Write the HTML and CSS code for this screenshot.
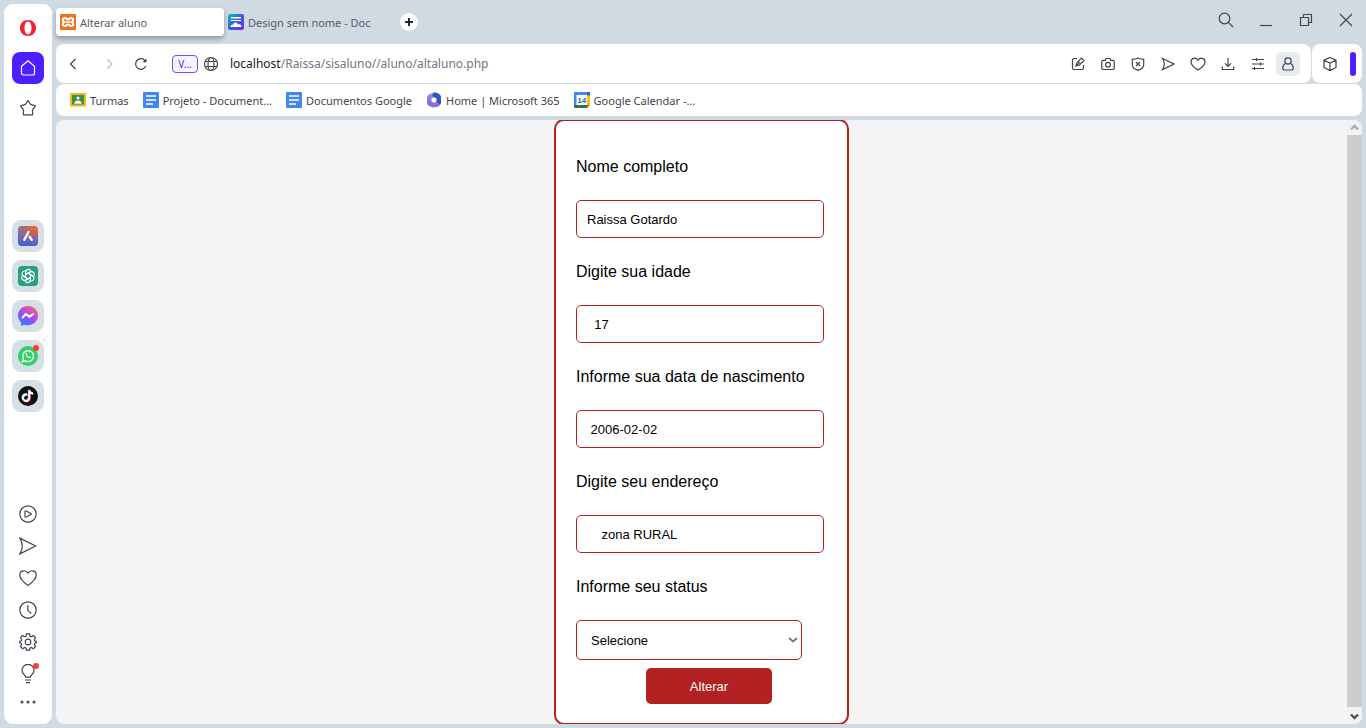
FILE: index.html
```html
<!DOCTYPE html>
<html lang="pt-BR">
<head>
<meta charset="utf-8">
<title>Alterar aluno</title>
<link rel="stylesheet" href="styles.css">
</head>
<body>
<aside class="sidebar">
  <div class="side-group">
    <button class="side-btn" aria-label="Menu"><svg width="18" height="18" viewBox="0 0 18 18"><path fill="#fa1e34" fill-rule="evenodd" d="M9 1C4.300 1 1 4.500 1 9s3.300 8 8 8 8-3.500 8-8-3.300-8-8-8zm0 1.600c2.100 0 3.500 2.800 3.500 6.400S11.100 15.400 9 15.400 5.500 12.600 5.500 9 6.900 2.600 9 2.600z"/></svg></button>
    <button class="side-btn home" aria-label="Início"><svg class="line" width="16" height="18" viewBox="0 0 16 18"><path d="M1.500 7.300 8 1.700l6.500 5.600v6.700a2 2 0 0 1-2 2h-9a2 2 0 0 1-2-2z"/></svg></button>
    <button class="side-btn" aria-label="Favoritos"><svg class="line" width="18" height="18" viewBox="0 0 18 18"><path stroke-linejoin="round" d="m9 1.500 2.600 3.900 4.800 1.400-2.900 4 .1 5H4.400l.1-5-2.900-4 4.800-1.400z"/></svg></button>
  </div>
  <div class="side-group apps">
    <button class="side-btn app" aria-label="Aria"><svg width="20" height="20" viewBox="0 0 20 20"><defs><linearGradient id="aria" x1="0" y1=".3" x2="1" y2=".2"><stop offset="0" stop-color="#8b6ea6"/><stop offset=".4" stop-color="#b5695f"/><stop offset="1" stop-color="#f0672c"/></linearGradient><linearGradient id="ariaBlue" x1="0" y1="0" x2="0" y2="1"><stop offset=".2" stop-color="#3f62dd" stop-opacity="0"/><stop offset="1" stop-color="#3f62dd"/></linearGradient></defs><rect width="20" height="20" rx="4" fill="url(#aria)"/><rect width="20" height="20" rx="4" fill="url(#ariaBlue)"/><path d="M6.300 13.800 10.500 6M11.700 10.800l2 3" fill="none" stroke="#fff" stroke-width="2.400" stroke-linecap="round"/></svg></button>
    <button class="side-btn app" aria-label="ChatGPT"><svg width="20" height="20" viewBox="0 0 20 20"><rect width="20" height="20" rx="4" fill="#26a17d"/><g fill="none" stroke="#fff" stroke-width="1.100"><path id="petal" d="M7.500 11.400V6.300a3 3 0 0 1 5.500-1.600M7.500 8.600l4.400-2.500a3 3 0 0 1 4.200 1.300"/><use href="#petal" transform="rotate(60 10 10)"/><use href="#petal" transform="rotate(120 10 10)"/><use href="#petal" transform="rotate(180 10 10)"/><use href="#petal" transform="rotate(240 10 10)"/><use href="#petal" transform="rotate(300 10 10)"/></g></svg></button>
    <button class="side-btn app" aria-label="Messenger"><svg width="20" height="20" viewBox="0 0 20 20"><defs><linearGradient id="msg" x1=".15" y1="1" x2=".8" y2="0"><stop offset="0" stop-color="#138fff"/><stop offset=".5" stop-color="#a445fb"/><stop offset="1" stop-color="#ff6870"/></linearGradient></defs><path d="M10 0C4.300 0 0 4.100 0 9.600c0 2.900 1.200 5.300 3.100 7V20l3.300-1.300c1.100.4 2.300.5 3.600.5 5.700 0 10-4.100 10-9.600S15.700 0 10 0z" fill="url(#msg)"/><path d="m4.200 12.200 3.500-4.400 3.600 3 4.500-3.300" fill="none" stroke="#fff" stroke-width="2.100" stroke-linejoin="round"/></svg></button>
    <button class="side-btn app" aria-label="WhatsApp"><svg width="20" height="20" viewBox="0 0 20 20"><circle cx="10" cy="10" r="10" fill="#2bd366"/><path d="m4.500 15.700.9-3.100a5.400 5.400 0 1 1 2.100 2.200z" fill="none" stroke="#fff" stroke-width="1.400"/><path d="M7.800 7.200c.5-.7 1-.4 1.300.6.200.6-.4.800-.4 1.100.5 1 1.300 1.700 2.300 2.100.4 0 .6-.8 1.100-.6 1.100.4 1.500.8.700 1.600-1.400 1.300-5.800-1.900-5-4.800z" fill="#fff"/></svg><span class="dot"></span></button>
    <button class="side-btn app" aria-label="TikTok"><svg width="20" height="20" viewBox="0 0 20 20"><circle cx="10" cy="10" r="10" fill="#111"/><g fill="none" stroke-width="1.900"><path stroke="#25f4ee" d="M8.800 8.300a3.200 3.200 0 1 0 2 3V3.800c.2 1.900 1.700 3.200 3.700 3.300"/><path stroke="#fe2c55" d="M9.800 9.300a3.200 3.200 0 1 0 2 3V4.800c.2 1.900 1.700 3.200 3.700 3.300"/><path stroke="#fff" d="M9.300 8.800a3.200 3.200 0 1 0 2 3V4.200c.2 1.900 1.700 3.200 3.700 3.300"/></g></svg></button>
  </div>
  <div class="side-group tools">
    <button class="side-btn" aria-label="Player"><svg class="line" width="18" height="18" viewBox="0 0 18 18"><circle cx="9" cy="9" r="8.200"/><path d="M6 6v6h1.500l5-3-5-3z" stroke-linejoin="round"/></svg></button>
    <button class="side-btn" aria-label="Flow"><svg class="line" width="18" height="18" viewBox="0 0 18 18"><path d="M.8 1.100 16.700 9 .8 16.900C4.200 11.500 4.200 6.500.8 1.100z"/></svg></button>
    <button class="side-btn" aria-label="Curtidos"><svg class="line" width="18" height="18" viewBox="0 0 18 18"><path d="M9 16.400C5.200 13.900.8 10.300.8 6.100.8 1.300 6.600.3 9 4.100c2.400-3.800 8.200-2.800 8.200 2 0 4.200-4.400 7.800-8.200 10.300z"/></svg></button>
    <button class="side-btn" aria-label="Histórico"><svg class="line" width="18" height="18" viewBox="0 0 18 18"><circle cx="9" cy="9" r="8.200"/><path d="M8.800 4.300v5l3.400 3.400"/></svg></button>
    <button class="side-btn" aria-label="Configurações"><svg class="line" width="18" height="18" viewBox="0 0 18 18"><circle cx="9" cy="9" r="2.800"/><path d="M7.400.8h3.200l.3 2.300 1.400.7 2-1.200 2.200 2.200-1.200 2 .6 1.300 1.300.2v1.600l-1.300.3-.6 1.300 1.200 2-2.200 2.200-2-1.200-1.400.6-.3 2.100H7.400l-.3-2.100-1.400-.6-2 1.200-2.200-2.200 1.200-2-.6-1.300L.8 9.900V8.300l1.300-.3.6-1.300-1.200-2 2.200-2.200 2 1.200 1.400-.6z"/></svg></button>
    <button class="side-btn" aria-label="Dicas"><svg class="line" width="18" height="20" viewBox="0 0 18 20"><path d="M6.600 13.200c0-2.200-3.600-3.200-3.600-6.900a6 6 0 0 1 12 0c0 3.700-3.600 4.700-3.600 6.900zM6 16h6M7 18.700h4"/></svg><span class="dot"></span></button>
    <button class="side-btn more" aria-label="Mais"><svg width="16" height="4" viewBox="0 0 16 4" fill="#4b5660"><circle cx="2" cy="2" r="1.600"/><circle cx="8" cy="2" r="1.600"/><circle cx="14" cy="2" r="1.600"/></svg></button>
  </div>
</aside>

<div class="window">
  <header class="tabbar">
    <button class="tab active"><svg width="16" height="16" viewBox="0 0 16 16"><rect width="16" height="16" rx="1" fill="#f0731c"/><path d="M5.500 8C2 8 2 4 5 4c1.500 0 1.500 1.500 3 1.500S9.500 4 11 4c3 0 3 4-.5 4 3.500 0 3.500 4 .5 4-1.500 0-1.500-1.500-3-1.500S6.500 12 5 12c-3 0-3-4 .5-4z" fill="none" stroke="#fff" stroke-width="2"/><path d="M6 7.200h4v1.600H6z" fill="#fff"/></svg>Alterar aluno</button>
    <button class="tab"><svg width="16" height="16" viewBox="0 0 16 16"><defs><linearGradient id="canva" x1="0" y1="0" x2="1" y2="1"><stop offset="0" stop-color="#08c4bd"/><stop offset=".5" stop-color="#365cdf"/><stop offset="1" stop-color="#8028ee"/></linearGradient></defs><rect width="16" height="16" rx="2" fill="url(#canva)"/><path d="M3 3h10v1.500H3zM3 6h10v1H3zM2.500 13c0-2 1.500-2.500 2.500-2.300C6 8 8.500 8 9.500 9.700l1 .8c2-.6 3 .8 3 2.500z" fill="#fff"/></svg>Design sem nome - Doc</button>
    <button class="new-tab" aria-label="Nova guia"><svg width="8" height="8" viewBox="0 0 8 8"><path d="M4 0v8M0 4h8" stroke="#222b36" stroke-width="2"/></svg></button>
    <div class="controls">
      <button aria-label="Pesquisar"><svg class="line" width="16" height="16" viewBox="0 0 16 16"><circle cx="6.500" cy="6.500" r="5.300"/><path d="m10.300 10.300 4.700 4.700"/></svg></button>
      <button aria-label="Minimizar"><svg class="line" width="14" height="14" viewBox="0 0 14 14"><path d="M1 12.500h12"/></svg></button>
      <button aria-label="Restaurar"><svg class="line" width="14" height="14" viewBox="0 0 14 14"><path d="M1.500 4.500h8v8h-8zM4.500 4.500v-3h8v8h-3"/></svg></button>
      <button aria-label="Fechar"><svg class="line" width="14" height="14" viewBox="0 0 14 14"><path d="m1 1 12 12M13 1 1 13"/></svg></button>
    </div>
  </header>

  <div class="address-row">
    <nav class="address">
      <button class="icon-btn" aria-label="Voltar"><svg class="line" width="16" height="16" viewBox="0 0 16 16"><path d="m10.500 3-5 5 5 5"/></svg></button>
      <button class="icon-btn forward" aria-label="Avançar"><svg class="line" width="16" height="16" viewBox="0 0 16 16"><path d="m6 3 5 5-5 5"/></svg></button>
      <button class="icon-btn reload" aria-label="Recarregar"><svg class="line" width="16" height="16" viewBox="0 0 16 16"><path d="M12.800 10.100A5.300 5.300 0 1 1 12 4.600"/><path d="M9.500 6.200h4V2.500z" fill="#3c444e" stroke="none"/></svg></button>
      <button class="vpn">V...</button>
      <svg class="line globe" width="16" height="16" viewBox="0 0 16 16"><circle cx="8" cy="8" r="6.500"/><ellipse cx="8" cy="8" rx="3" ry="6.500"/><path d="M2 5.500h12M2 10.500h12"/></svg>
      <a class="url" href="#"><span class="host">localhost</span>/Raissa/sisaluno//aluno/altaluno.php</a>
      <div class="actions">
        <button class="icon-btn" aria-label="Editar"><svg class="line" width="14" height="14" viewBox="0 0 14 14"><path d="M6 1.500H3a1.500 1.500 0 0 0-1.500 1.500v8A1.500 1.500 0 0 0 3 12.500h8a1.500 1.500 0 0 0 1.500-1.500V8M5 9l1-3.500L10.500 1 13 3.500 8.500 8z"/><path d="m5 9 4-4"/></svg></button>
        <button class="icon-btn" aria-label="Captura"><svg class="line" width="14" height="14" viewBox="0 0 14 14"><path d="M4.300 3.300 5 1.500h4l.7 1.800H12a1.200 1.200 0 0 1 1.200 1.200v6.800a1.200 1.200 0 0 1-1.200 1.200H2a1.200 1.200 0 0 1-1.200-1.200V4.500A1.200 1.200 0 0 1 2 3.300z"/><circle cx="7" cy="7.700" r="2.400"/></svg></button>
        <button class="icon-btn" aria-label="Bloqueador"><svg class="line" width="14" height="14" viewBox="0 0 14 14"><path d="M7 .9C5.200 2 3.200 2.300 1.300 2.300v5.500c0 3 3 4.700 5.700 5.500 2.700-.8 5.700-2.500 5.700-5.500V2.300C10.800 2.300 8.800 2 7 .9zM5 5l4 4M9 5 5 9"/></svg></button>
        <button class="icon-btn" aria-label="Enviar"><svg class="line" width="14" height="14" viewBox="0 0 14 14"><path d="m1.500 1.500 11.500 5.500-11.500 5.500C4 8.500 4 5.500 1.500 1.500z"/></svg></button>
        <button class="icon-btn" aria-label="Curtir"><svg class="line" width="16" height="14" viewBox="0 0 16 14"><path d="M8 13C4.500 10.900 1 8 1 4.700 1 .8 6 0 8 3.200 10 0 15 .8 15 4.700 15 8 11.500 10.900 8 13z"/></svg></button>
        <button class="icon-btn" aria-label="Downloads"><svg class="line" width="14" height="14" viewBox="0 0 14 14"><path d="M7 1v8M4 6.300l3 3 3-3M1.300 9.500v3h11.400v-3"/></svg></button>
        <button class="icon-btn" aria-label="Ajustes"><svg class="line" width="14" height="14" viewBox="0 0 14 14"><path d="M1 2.500h12M1 7h12M1 11.500h12M5.500 1v3M9.500 5.500v3M3.500 10v3"/></svg></button>
        <button class="icon-btn profile" aria-label="Perfil"><svg class="line" width="14" height="14" viewBox="0 0 14 14"><circle cx="7" cy="4" r="3.200"/><path d="M4.700 6.300c-1.800 1-3 2.900-3 5 0 .9.600 1.700 1.600 1.700h7.400c1 0 1.600-.8 1.600-1.700 0-2.100-1.200-4-3-5"/></svg></button>
      </div>
    </nav>
    <div class="extension">
      <button class="icon-btn" aria-label="Extensões"><svg class="line" width="16" height="16" viewBox="0 0 16 16"><path d="m8 1.500 6 2.700v7.300l-6 3-6-3V4.200zM2 4.200 8 7l6-2.800M8 7v7.500"/></svg></button>
      <span class="accent"></span>
    </div>
  </div>

  <nav class="bookmarks">
    <a href="#"><svg width="16" height="16" viewBox="0 0 16 16"><path d="M0 1h16v13.500H0z" fill="#f5ba15"/><path d="M2 3h12v9.500H2z" fill="#37914f"/><circle cx="8" cy="6" r="1.600" fill="#fff"/><path d="M4.500 11c0-3.500 7-3.500 7 0v.7h-7z" fill="#fff"/></svg>Turmas</a>
    <a href="#"><svg width="16" height="16" viewBox="0 0 16 16"><rect width="16" height="16" rx="1" fill="#4285f4"/><path d="M3 4h10M3 8h10M3 12h7" stroke="#fff" stroke-width="1.700"/></svg>Projeto - Document...</a>
    <a href="#"><svg width="16" height="16" viewBox="0 0 16 16"><rect width="16" height="16" rx="1" fill="#4285f4"/><path d="M3 4h10M3 8h10M3 12h7" stroke="#fff" stroke-width="1.700"/></svg>Documentos Google</a>
    <a href="#"><svg width="16" height="16" viewBox="0 0 16 16"><defs><linearGradient id="m365" x1="0" y1="0" x2="0" y2="1"><stop offset="0" stop-color="#b28be6"/><stop offset="1" stop-color="#5a6be0"/></linearGradient></defs><path d="M6.500 1C8.500 0 10 .3 12 1.500c2 1.100 3 2.200 3 4.500v4c0 2-.8 3.200-2.500 4.200C10 15.700 6 15.700 3.500 14 1.800 13 1 12 1 10V6c0-2 .8-3 2.500-4z" fill="url(#m365)"/><path d="M8 .5c1.500-.2 2.500.2 4 1 2 1.100 3 2.200 3 4.500v4c0 1-.5 2-1 2.500l-4-3V6L6.500 4.500c0-2 .3-3 1.500-4z" fill="#2f55bb"/><path d="m5 11 5-1 4 2.500c-1.500 2-5 2.800-7 2.600-2-.3-3-1.600-2-4.100z" fill="#9a68e0"/><path d="m8 5.200 2.500 1.400v2.900L8 10.800 5.500 9.500V6.600z" fill="#fff"/></svg>Home | Microsoft 365</a>
    <a href="#"><svg width="16" height="16" viewBox="0 0 16 16"><path d="M0 0h16v4H3v9H0z" fill="#4285f4"/><path d="M13 3.500h3V13h-3z" fill="#fbbc04"/><path d="M0 13h13v3H1a1 1 0 0 1-1-1z" fill="#188038"/><path d="M13 0h2a1 1 0 0 1 1 1v2h-3z" fill="#1967d2"/><path d="M13 13h3l-3 3z" fill="#ea4335"/><path d="M2.500 3H13v10H2.500z" fill="#fff"/><text class="day" x="7.800" y="11">14</text></svg>Google Calendar -...</a>
  </nav>

  <div class="viewport">
    <main class="page">
      <form class="card">
        <div class="field"><label for="nome">Nome completo</label><input id="nome" type="text" value="Raissa Gotardo"></div>
        <div class="field"><label for="idade">Digite sua idade</label><input id="idade" type="text" value="  17"></div>
        <div class="field"><label for="data">Informe sua data de nascimento</label><input id="data" type="text" value=" 2006-02-02"></div>
        <div class="field"><label for="endereco">Digite seu endereço</label><input id="endereco" type="text" value="    zona RURAL"></div>
        <div class="field"><label for="status">Informe seu status</label>
          <div class="select"><select id="status"><option>Selecione</option></select><svg width="10" height="6" viewBox="0 0 10 6"><path d="m1 1 4 3.500L9 1" fill="none" stroke="#767676" stroke-width="1.800"/></svg></div>
        </div>
        <button class="submit" type="submit">Alterar</button>
      </form>
    </main>
    <div class="scrollbar">
      <svg width="15" height="15" viewBox="0 0 15 15"><path d="M4 9.500 7.500 6 11 9.500" fill="none" stroke="#acacac" stroke-width="2.400"/></svg>
      <div class="thumb"></div>
      <svg width="15" height="17" viewBox="0 0 15 17"><path d="M4 7.500 7.500 11 11 7.500" fill="none" stroke="#505050" stroke-width="2.400"/></svg>
    </div>
  </div>
</div>
</body>
</html>
```
FILE: styles.css
```css
* { box-sizing: border-box; }

body {
  margin: 0;
  height: 100vh;
  padding: 4px;
  display: flex;
  gap: 4px;
  overflow: hidden;
  background: #d0dae2;
  color: #3f444a;
  font: 11px "Noto Sans", "Open Sans", sans-serif;
}

button {
  font: inherit;
  color: inherit;
  padding: 0;
  border: 0;
  background: none;
}

a { color: inherit; text-decoration: none; }
svg { display: block; flex: none; }

.line {
  fill: none;
  stroke: #3c4650;
  stroke-width: 1.2;
}

.sidebar {
  flex: 0 0 48px;
  display: flex;
  flex-direction: column;
  padding: 8px 0 10px;
  border-radius: 9px;
  background: #fff;
}

.side-group {
  display: flex;
  flex-direction: column;
  align-items: center;
  gap: 8px;
}

.side-group.apps { margin-top: 96px; }
.side-group.tools { margin-top: auto; gap: 0; }

.side-btn {
  position: relative;
  width: 32px;
  height: 32px;
  display: grid;
  place-items: center;
}

.side-btn.home { border-radius: 8px; background: #4d1fff; }
.side-btn.home .line { stroke: #fff; }
.side-btn.app { border-radius: 9px; background: #d5dfe5; }
.side-btn.more { height: 24px; }

.dot {
  position: absolute;
  top: 5px;
  right: 5px;
  width: 6px;
  height: 6px;
  border-radius: 50%;
  background: #ff3b30;
}

.window {
  flex: 1;
  min-width: 0;
  display: flex;
  flex-direction: column;
}

.tabbar {
  height: 40px;
  padding: 4px 0 8px;
  display: flex;
  align-items: center;
}

.tab {
  width: 168px;
  height: 28px;
  padding: 0 4px;
  display: flex;
  align-items: center;
  gap: 4px;
  border-radius: 4px;
  color: #565d64;
  white-space: nowrap;
}

.tab.active {
  background: #fff;
  box-shadow: 0 3px 5px #8f9ba6;
}

.new-tab {
  width: 18px;
  height: 18px;
  margin-left: 8px;
  display: grid;
  place-items: center;
  border-radius: 50%;
  background: #fff;
}

.controls {
  display: flex;
  align-self: flex-start;
  margin: -4px -4px 0 auto;
}

.controls button {
  width: 40px;
  height: 32px;
  display: grid;
  place-items: center;
}

.address-row { display: flex; gap: 1px; }

.address,
.extension {
  height: 39px;
  display: flex;
  align-items: center;
  border-radius: 8px;
  background: #fff;
}

.address { flex: 1; min-width: 0; padding: 0 11px 0 5px; }
.extension { padding: 0 6px; gap: 8px; }

.icon-btn {
  width: 24px;
  height: 24px;
  display: grid;
  place-items: center;
}

.forward { margin-left: 12px; opacity: .35; }
.reload { margin-left: 8px; }

.vpn {
  width: 26px;
  height: 18px;
  margin-left: 19px;
  border: 1px solid #6f4cff;
  border-radius: 4px;
  background: #f6f3ff;
  color: #4d1fff;
  font-size: 10px;
  line-height: 16px;
}

.globe { margin: 0 11px 0 5px; }
.url { color: #6b7885; font-size: 12px; white-space: nowrap; }
.host { color: #15191d; }
.actions { display: flex; gap: 6px; margin-left: auto; }
.profile { border-radius: 5px; background: #e7ecf0; }

.accent {
  width: 6px;
  height: 24px;
  border-radius: 3px;
  background: #4d1fff;
}

.bookmarks {
  height: 32px;
  margin: 1px 0 4px;
  padding: 0 14px;
  display: flex;
  align-items: center;
  gap: 14px;
  border-radius: 8px;
  background: #fff;
}

.bookmarks a {
  display: flex;
  align-items: center;
  gap: 4px;
  white-space: nowrap;
}

.day {
  fill: #1967d2;
  font: bold 8px "Liberation Sans", sans-serif;
  text-anchor: middle;
}

.viewport {
  flex: 1;
  min-height: 0;
  display: flex;
  overflow: hidden;
  border-radius: 8px;
  background: #f4f4f4;
}

.page {
  flex: 1;
  display: flex;
  align-items: center;
  justify-content: center;
  color: #000;
  font-family: "Liberation Sans", Arial, sans-serif;
}

.card {
  width: 295px;
  flex: none;
  display: flex;
  flex-direction: column;
  padding: 37px 20px 19px;
  border: 2px solid #b22222;
  border-radius: 10px;
  background: #fff;
}

.field {
  display: flex;
  flex-direction: column;
  align-items: flex-start;
  margin-bottom: 25px;
}

.field label {
  margin-bottom: 24px;
  font-size: 16px;
  line-height: 18px;
}

.field input,
.field select {
  border: 1px solid #b22222;
  border-radius: 5px;
  background: #fff;
  color: #000;
  font: 13px "Liberation Sans", Arial, sans-serif;
}

.field input { width: 248px; height: 38px; padding: 0 10px; }

.select { display: grid; align-items: center; }
.select > * { grid-area: 1 / 1; }
.select svg { justify-self: end; margin-right: 4px; pointer-events: none; }

.field select {
  width: 226px;
  height: 40px;
  padding: 0 14px;
  appearance: none;
}

.field:has(select) { margin-bottom: 8px; }

.submit {
  width: 126px;
  height: 36px;
  margin-left: 70px;
  border-radius: 5px;
  background: #b22222;
  color: #fff;
  font: 13px "Liberation Sans", Arial, sans-serif;
}

.scrollbar {
  width: 15px;
  display: flex;
  flex-direction: column;
  background: #f1f1f1;
}

.thumb { flex: 1; background: #cdcdcd; }
```
